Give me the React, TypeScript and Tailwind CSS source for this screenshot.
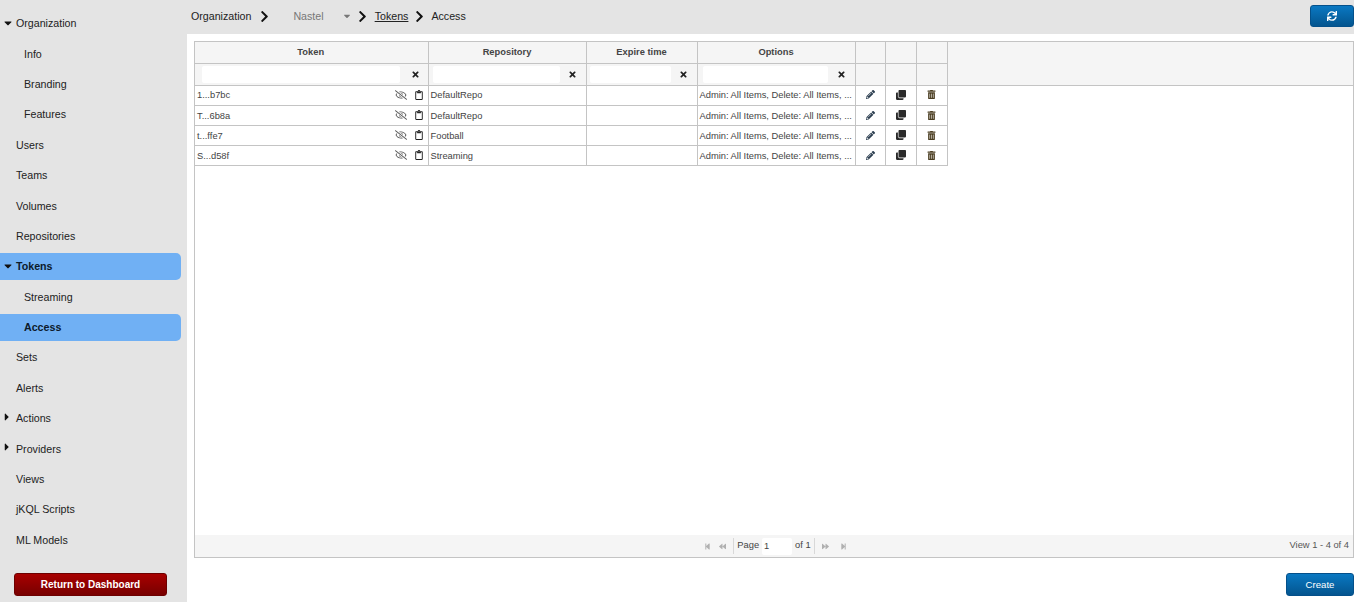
import React from "react";
import { FaPencilAlt, FaClone, FaTrashAlt, FaSync, FaTimes, FaRegEyeSlash, FaRegClipboard, FaCaretDown, FaCaretRight, FaStepBackward, FaStepForward, FaBackward, FaForward, FaChevronRight } from "react-icons/fa";

const nav: { label: string; indent?: boolean; caret?: "down" | "right"; active?: boolean }[] = [
  { label: "Organization", caret: "down" },
  { label: "Info", indent: true },
  { label: "Branding", indent: true },
  { label: "Features", indent: true },
  { label: "Users" },
  { label: "Teams" },
  { label: "Volumes" },
  { label: "Repositories" },
  { label: "Tokens", caret: "down", active: true },
  { label: "Streaming", indent: true },
  { label: "Access", indent: true, active: true },
  { label: "Sets" },
  { label: "Alerts" },
  { label: "Actions", caret: "right" },
  { label: "Providers", caret: "right" },
  { label: "Views" },
  { label: "jKQL Scripts" },
  { label: "ML Models" },
];

const rows = [
  { token: "1...b7bc", repo: "DefaultRepo" },
  { token: "T...6b8a", repo: "DefaultRepo" },
  { token: "t...ffe7", repo: "Football" },
  { token: "S...d58f", repo: "Streaming" },
];

const blue = "bg-gradient-to-b from-[#0a78c2] to-[#04558f] border border-[#04508a] rounded-[3px] text-white";

function Columns() {
  return (
    <colgroup>
      <col className="w-[234px]" /><col className="w-[158px]" /><col className="w-[111px]" /><col className="w-[158px]" /><col className="w-[30px]" /><col className="w-[31px]" /><col className="w-[31px]" />
    </colgroup>
  );
}

function Filter({ pad, w, xPad = "" }: { pad: string; w: string; xPad?: string }) {
  return (
    <td className={`h-[22px] border-r border-[#c4c4c4] p-0 ${pad}`}>
      <div className="flex items-center">
        <div className={`h-[17px] rounded-[2px] bg-white ${w}`} />
        <div className={`flex-1 flex justify-center ${xPad}`}><FaTimes className="text-[9px] text-[#222]" /></div>
      </div>
    </td>
  );
}

export default function App() {
  return (
    <div className="w-[1354px] h-[602px] flex overflow-hidden bg-white text-[#222] text-[10.67px] font-['Liberation_Sans',Arial,sans-serif]">
      <aside className="w-[187px] shrink-0 bg-[#e4e4e4] flex flex-col pt-[9.7px]">
        {nav.map((n) => (
          <div
            key={n.label}
            className={`relative h-[27px] mb-[3.4px] w-[181px] flex items-center rounded-r-[5px] ${n.indent ? "pl-[24px]" : "pl-[16px]"} ${n.active ? "bg-[#70b0f4] font-bold text-[#0c1a2a]" : ""}`}
          >
            {n.caret === "down" && <FaCaretDown className="absolute left-[2px] top-[7px] text-[12px] text-[#111]" />}
            {n.caret === "right" && <FaCaretRight className="absolute left-[1px] top-[6px] text-[12px] text-[#111]" />}
            {n.label}
          </div>
        ))}
        <div className="mt-auto mb-[6px] ml-[14px] w-[153px] h-[23px] flex items-center justify-center rounded-[3px] border border-[#6d0000] bg-gradient-to-b from-[#a80000] to-[#780000] text-white font-bold text-[10px]">
          Return to Dashboard
        </div>
      </aside>
      <main className="flex-1 min-w-0 flex flex-col">
        <header className="h-[34px] shrink-0 bg-[#e4e4e4] flex items-center pl-[4px] pb-[2px]">
          <span>Organization</span>
          <FaChevronRight className="ml-[7px] text-[13px] text-[#111]" />
          <span className="ml-[22px] text-[#777]">Nastel</span>
          <FaCaretDown className="ml-[18px] text-[10px] text-[#777]" />
          <FaChevronRight className="ml-[4px] text-[13px] text-[#111]" />
          <span className="ml-[6px] underline">Tokens</span>
          <FaChevronRight className="ml-[5px] text-[13px] text-[#111]" />
          <span className="ml-[5px]">Access</span>
          <div className={`ml-auto w-[44px] h-[22px] flex items-center justify-center ${blue}`}>
            <FaSync className="text-[10px]" />
          </div>
        </header>
        <section className="flex-1 min-h-0 flex flex-col pl-[7px] pt-[7px]">
          <div className="h-[517px] border border-[#c4c4c4] flex flex-col">
            <div className="bg-[#f5f5f5] border-b border-[#c4c4c4]">
              <table className="table-fixed border-collapse w-[753px] text-[9.33px] -ml-px">
                <Columns />
                <tbody>
                  <tr className="border-b border-[#c4c4c4] font-bold text-[#444]">
                    {["Token", "Repository", "Expire time", "Options", "", "", ""].map((h, i) => (
                      <td key={i} className="h-[21px] p-0 pt-px text-center border-r border-[#c4c4c4]">{h}</td>
                    ))}
                  </tr>
                  <tr>
                    <Filter pad="pl-[8px]" w="w-[198px]" xPad="pl-[4px]" />
                    <Filter pad="pl-[4px]" w="w-[127px]" />
                    <Filter pad="pl-[3px]" w="w-[81px]" />
                    <Filter pad="pl-[5px]" w="w-[125px]" />
                    <td className="border-r border-[#c4c4c4]" /><td className="border-r border-[#c4c4c4]" /><td className="border-r border-[#c4c4c4]" />
                  </tr>
                </tbody>
              </table>
            </div>
            <div className="flex-1 min-h-0">
              <table className="table-fixed border-collapse w-[753px] text-[9.33px] text-[#444] -ml-px -mt-px">
                <Columns />
                <tbody>
                  {rows.map((r) => (
                    <tr key={r.token} className="h-[20px] border-b border-[#c4c4c4]">
                      <td className="p-0 pl-[3px] border-r border-[#c4c4c4]">
                        <div className="flex items-center h-[19px]">
                          <span className="flex-1 pt-[3px]">{r.token}</span>
                          <FaRegEyeSlash className="text-[12px] text-[#555] mr-[7px]" />
                          <FaRegClipboard className="text-[10px] text-[#222] mr-[4px]" />
                        </div>
                      </td>
                      <td className="p-0 pt-[3px] pl-[2px] border-r border-[#c4c4c4]">{r.repo}</td>
                      <td className="p-0 border-r border-[#c4c4c4]" />
                      <td className="p-0 pt-[3px] pl-[2px] border-r border-[#c4c4c4] whitespace-nowrap">Admin: All Items, Delete: All Items, ...</td>
                      <td className="p-0 border-r border-[#c4c4c4]"><FaPencilAlt className="mx-auto text-[9px] text-[#2c3e50]" /></td>
                      <td className="p-0 border-r border-[#c4c4c4]"><FaClone className="mx-auto text-[10px] text-[#2a2a2a]" /></td>
                      <td className="p-0 border-r border-[#c4c4c4]"><FaTrashAlt className="mx-auto text-[9px] text-[#4a3d20]" /></td>
                    </tr>
                  ))}
                </tbody>
              </table>
            </div>
            <footer className="relative h-[22px] shrink-0 bg-[#f5f5f5] flex items-center justify-center text-[9.33px] text-[#444]">
              <div className="flex items-center ml-[3px]">
                <FaStepBackward className="text-[7px] text-[#b0b0b0]" />
                <FaBackward className="ml-[8px] text-[7px] text-[#b0b0b0]" />
                <div className="ml-[7px] h-[16px] border-l border-[#d8d8d8]" />
                <span className="ml-[3px]">Page</span>
                <div className="ml-[3px] w-[30px] h-[17px] rounded-[2px] bg-white pl-[2px] leading-[17px]">1</div>
                <span className="ml-[3px]">of 1</span>
                <div className="ml-[3px] h-[16px] border-l border-[#d8d8d8]" />
                <FaForward className="ml-[7px] text-[7px] text-[#b0b0b0]" />
                <FaStepForward className="ml-[11px] text-[7px] text-[#b0b0b0]" />
              </div>
              <span className="absolute right-[4px] text-[#555]">View 1 - 4 of 4</span>
            </footer>
          </div>
          <div className="flex justify-end mt-[15px]">
            <div className={`w-[68px] h-[23px] pt-px flex items-center justify-center text-[9.6px] ${blue}`}>Create</div>
          </div>
        </section>
      </main>
    </div>
  );
}
